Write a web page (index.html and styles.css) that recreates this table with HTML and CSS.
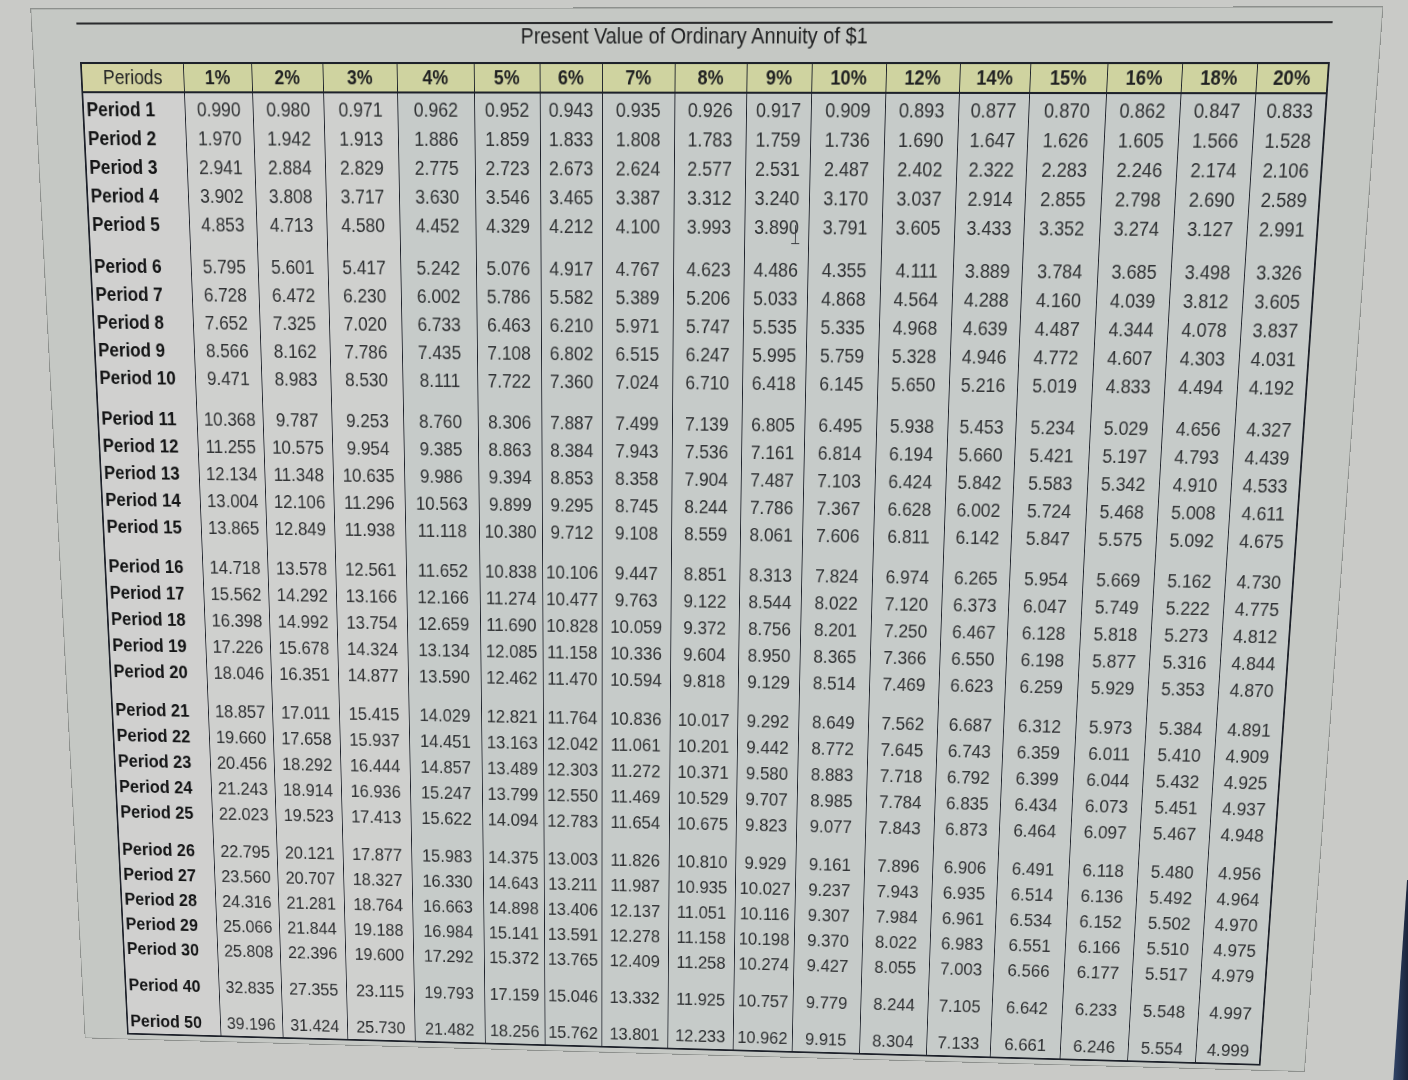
FILE: index.html
```
<!DOCTYPE html>
<html>
<head>
<meta charset="utf-8">
<title>Present Value of Ordinary Annuity of $1</title>
<link rel="stylesheet" href="styles.css">
</head>
<body>
<div class="stage">
  <div class="panel">
    <div class="rule"></div>
    <h1 class="title">Present Value of Ordinary Annuity of $1</h1>
    <table class="pv">
      <colgroup>
        <col class="c0"><col class="c1"><col class="c2"><col class="c3"><col class="c4"><col class="c5"><col class="c6"><col class="c7"><col class="c8"><col class="c9"><col class="c10"><col class="c12"><col class="c14"><col class="c15"><col class="c16"><col class="c18"><col class="c20">
      </colgroup>
      <thead>
        <tr><th class="lbl">Periods</th><th>1%</th><th>2%</th><th>3%</th><th>4%</th><th>5%</th><th>6%</th><th>7%</th><th>8%</th><th>9%</th><th>10%</th><th>12%</th><th>14%</th><th>15%</th><th>16%</th><th>18%</th><th>20%</th></tr>
      </thead>
      <tbody>
        <tr class="first"><td class="lbl">Period 1</td><td>0.990</td><td>0.980</td><td>0.971</td><td class="t">0.962</td><td class="t">0.952</td><td class="t">0.943</td><td class="t">0.935</td><td class="t">0.926</td><td class="t">0.917</td><td class="t">0.909</td><td class="t">0.893</td><td class="t">0.877</td><td class="t">0.870</td><td class="t">0.862</td><td class="t">0.847</td><td class="t">0.833</td></tr>
        <tr><td class="lbl">Period 2</td><td>1.970</td><td>1.942</td><td>1.913</td><td class="t">1.886</td><td class="t">1.859</td><td class="t">1.833</td><td class="t">1.808</td><td class="t">1.783</td><td class="t">1.759</td><td class="t">1.736</td><td class="t">1.690</td><td class="t">1.647</td><td class="t">1.626</td><td class="t">1.605</td><td class="t">1.566</td><td class="t">1.528</td></tr>
        <tr><td class="lbl">Period 3</td><td>2.941</td><td>2.884</td><td>2.829</td><td class="t">2.775</td><td class="t">2.723</td><td class="t">2.673</td><td class="t">2.624</td><td class="t">2.577</td><td class="t">2.531</td><td class="t">2.487</td><td class="t">2.402</td><td class="t">2.322</td><td class="t">2.283</td><td class="t">2.246</td><td class="t">2.174</td><td class="t">2.106</td></tr>
        <tr><td class="lbl">Period 4</td><td>3.902</td><td>3.808</td><td>3.717</td><td class="t">3.630</td><td class="t">3.546</td><td class="t">3.465</td><td class="t">3.387</td><td class="t">3.312</td><td class="t">3.240</td><td class="t">3.170</td><td class="t">3.037</td><td class="t">2.914</td><td class="t">2.855</td><td class="t">2.798</td><td class="t">2.690</td><td class="t">2.589</td></tr>
        <tr class="last"><td class="lbl">Period 5</td><td>4.853</td><td>4.713</td><td>4.580</td><td class="t">4.452</td><td class="t">4.329</td><td class="t">4.212</td><td class="t">4.100</td><td class="t">3.993</td><td class="t cur">3.890<span class="ibeam"></span></td><td class="t">3.791</td><td class="t">3.605</td><td class="t">3.433</td><td class="t">3.352</td><td class="t">3.274</td><td class="t">3.127</td><td class="t">2.991</td></tr>
        <tr class="first"><td class="lbl">Period 6</td><td>5.795</td><td>5.601</td><td>5.417</td><td class="t">5.242</td><td class="t">5.076</td><td class="t">4.917</td><td class="t">4.767</td><td class="t">4.623</td><td class="t">4.486</td><td class="t">4.355</td><td class="t">4.111</td><td class="t">3.889</td><td class="t">3.784</td><td class="t">3.685</td><td class="t">3.498</td><td class="t">3.326</td></tr>
        <tr><td class="lbl">Period 7</td><td>6.728</td><td>6.472</td><td>6.230</td><td class="t">6.002</td><td class="t">5.786</td><td class="t">5.582</td><td class="t">5.389</td><td class="t">5.206</td><td class="t">5.033</td><td class="t">4.868</td><td class="t">4.564</td><td class="t">4.288</td><td class="t">4.160</td><td class="t">4.039</td><td class="t">3.812</td><td class="t">3.605</td></tr>
        <tr><td class="lbl">Period 8</td><td>7.652</td><td>7.325</td><td>7.020</td><td class="t">6.733</td><td class="t">6.463</td><td class="t">6.210</td><td class="t">5.971</td><td class="t">5.747</td><td class="t">5.535</td><td class="t">5.335</td><td class="t">4.968</td><td class="t">4.639</td><td class="t">4.487</td><td class="t">4.344</td><td class="t">4.078</td><td class="t">3.837</td></tr>
        <tr><td class="lbl">Period 9</td><td>8.566</td><td>8.162</td><td>7.786</td><td class="t">7.435</td><td class="t">7.108</td><td class="t">6.802</td><td class="t">6.515</td><td class="t">6.247</td><td class="t">5.995</td><td class="t">5.759</td><td class="t">5.328</td><td class="t">4.946</td><td class="t">4.772</td><td class="t">4.607</td><td class="t">4.303</td><td class="t">4.031</td></tr>
        <tr class="last"><td class="lbl">Period 10</td><td>9.471</td><td>8.983</td><td>8.530</td><td class="t">8.111</td><td class="t">7.722</td><td class="t">7.360</td><td class="t">7.024</td><td class="t">6.710</td><td class="t">6.418</td><td class="t">6.145</td><td class="t">5.650</td><td class="t">5.216</td><td class="t">5.019</td><td class="t">4.833</td><td class="t">4.494</td><td class="t">4.192</td></tr>
        <tr class="first"><td class="lbl">Period 11</td><td>10.368</td><td>9.787</td><td>9.253</td><td class="t">8.760</td><td class="t">8.306</td><td class="t">7.887</td><td class="t">7.499</td><td class="t">7.139</td><td class="t">6.805</td><td class="t">6.495</td><td class="t">5.938</td><td class="t">5.453</td><td class="t">5.234</td><td class="t">5.029</td><td class="t">4.656</td><td class="t">4.327</td></tr>
        <tr><td class="lbl">Period 12</td><td>11.255</td><td>10.575</td><td>9.954</td><td class="t">9.385</td><td class="t">8.863</td><td class="t">8.384</td><td class="t">7.943</td><td class="t">7.536</td><td class="t">7.161</td><td class="t">6.814</td><td class="t">6.194</td><td class="t">5.660</td><td class="t">5.421</td><td class="t">5.197</td><td class="t">4.793</td><td class="t">4.439</td></tr>
        <tr><td class="lbl">Period 13</td><td>12.134</td><td>11.348</td><td>10.635</td><td class="t">9.986</td><td class="t">9.394</td><td class="t">8.853</td><td class="t">8.358</td><td class="t">7.904</td><td class="t">7.487</td><td class="t">7.103</td><td class="t">6.424</td><td class="t">5.842</td><td class="t">5.583</td><td class="t">5.342</td><td class="t">4.910</td><td class="t">4.533</td></tr>
        <tr><td class="lbl">Period 14</td><td>13.004</td><td>12.106</td><td>11.296</td><td class="t">10.563</td><td class="t">9.899</td><td class="t">9.295</td><td class="t">8.745</td><td class="t">8.244</td><td class="t">7.786</td><td class="t">7.367</td><td class="t">6.628</td><td class="t">6.002</td><td class="t">5.724</td><td class="t">5.468</td><td class="t">5.008</td><td class="t">4.611</td></tr>
        <tr class="last"><td class="lbl">Period 15</td><td>13.865</td><td>12.849</td><td>11.938</td><td class="t">11.118</td><td class="t">10.380</td><td class="t">9.712</td><td class="t">9.108</td><td class="t">8.559</td><td class="t">8.061</td><td class="t">7.606</td><td class="t">6.811</td><td class="t">6.142</td><td class="t">5.847</td><td class="t">5.575</td><td class="t">5.092</td><td class="t">4.675</td></tr>
        <tr class="first"><td class="lbl">Period 16</td><td>14.718</td><td>13.578</td><td>12.561</td><td class="t">11.652</td><td class="t">10.838</td><td class="t">10.106</td><td class="t">9.447</td><td class="t">8.851</td><td class="t">8.313</td><td class="t">7.824</td><td class="t">6.974</td><td class="t">6.265</td><td class="t">5.954</td><td class="t">5.669</td><td class="t">5.162</td><td class="t">4.730</td></tr>
        <tr><td class="lbl">Period 17</td><td>15.562</td><td>14.292</td><td>13.166</td><td class="t">12.166</td><td class="t">11.274</td><td class="t">10.477</td><td class="t">9.763</td><td class="t">9.122</td><td class="t">8.544</td><td class="t">8.022</td><td class="t">7.120</td><td class="t">6.373</td><td class="t">6.047</td><td class="t">5.749</td><td class="t">5.222</td><td class="t">4.775</td></tr>
        <tr><td class="lbl">Period 18</td><td>16.398</td><td>14.992</td><td>13.754</td><td class="t">12.659</td><td class="t">11.690</td><td class="t">10.828</td><td class="t">10.059</td><td class="t">9.372</td><td class="t">8.756</td><td class="t">8.201</td><td class="t">7.250</td><td class="t">6.467</td><td class="t">6.128</td><td class="t">5.818</td><td class="t">5.273</td><td class="t">4.812</td></tr>
        <tr><td class="lbl">Period 19</td><td>17.226</td><td>15.678</td><td>14.324</td><td class="t">13.134</td><td class="t">12.085</td><td class="t">11.158</td><td class="t">10.336</td><td class="t">9.604</td><td class="t">8.950</td><td class="t">8.365</td><td class="t">7.366</td><td class="t">6.550</td><td class="t">6.198</td><td class="t">5.877</td><td class="t">5.316</td><td class="t">4.844</td></tr>
        <tr class="last"><td class="lbl">Period 20</td><td>18.046</td><td>16.351</td><td>14.877</td><td class="t">13.590</td><td class="t">12.462</td><td class="t">11.470</td><td class="t">10.594</td><td class="t">9.818</td><td class="t">9.129</td><td class="t">8.514</td><td class="t">7.469</td><td class="t">6.623</td><td class="t">6.259</td><td class="t">5.929</td><td class="t">5.353</td><td class="t">4.870</td></tr>
        <tr class="first"><td class="lbl">Period 21</td><td>18.857</td><td>17.011</td><td>15.415</td><td class="t">14.029</td><td class="t">12.821</td><td class="t">11.764</td><td class="t">10.836</td><td class="t">10.017</td><td class="t">9.292</td><td class="t">8.649</td><td class="t">7.562</td><td class="t">6.687</td><td class="t">6.312</td><td class="t">5.973</td><td class="t">5.384</td><td class="t">4.891</td></tr>
        <tr><td class="lbl">Period 22</td><td>19.660</td><td>17.658</td><td>15.937</td><td class="t">14.451</td><td class="t">13.163</td><td class="t">12.042</td><td class="t">11.061</td><td class="t">10.201</td><td class="t">9.442</td><td class="t">8.772</td><td class="t">7.645</td><td class="t">6.743</td><td class="t">6.359</td><td class="t">6.011</td><td class="t">5.410</td><td class="t">4.909</td></tr>
        <tr><td class="lbl">Period 23</td><td>20.456</td><td>18.292</td><td>16.444</td><td class="t">14.857</td><td class="t">13.489</td><td class="t">12.303</td><td class="t">11.272</td><td class="t">10.371</td><td class="t">9.580</td><td class="t">8.883</td><td class="t">7.718</td><td class="t">6.792</td><td class="t">6.399</td><td class="t">6.044</td><td class="t">5.432</td><td class="t">4.925</td></tr>
        <tr><td class="lbl">Period 24</td><td>21.243</td><td>18.914</td><td>16.936</td><td class="t">15.247</td><td class="t">13.799</td><td class="t">12.550</td><td class="t">11.469</td><td class="t">10.529</td><td class="t">9.707</td><td class="t">8.985</td><td class="t">7.784</td><td class="t">6.835</td><td class="t">6.434</td><td class="t">6.073</td><td class="t">5.451</td><td class="t">4.937</td></tr>
        <tr class="last"><td class="lbl">Period 25</td><td>22.023</td><td>19.523</td><td>17.413</td><td class="t">15.622</td><td class="t">14.094</td><td class="t">12.783</td><td class="t">11.654</td><td class="t">10.675</td><td class="t">9.823</td><td class="t">9.077</td><td class="t">7.843</td><td class="t">6.873</td><td class="t">6.464</td><td class="t">6.097</td><td class="t">5.467</td><td class="t">4.948</td></tr>
        <tr class="first"><td class="lbl">Period 26</td><td>22.795</td><td>20.121</td><td>17.877</td><td class="t">15.983</td><td class="t">14.375</td><td class="t">13.003</td><td class="t">11.826</td><td class="t">10.810</td><td class="t">9.929</td><td class="t">9.161</td><td class="t">7.896</td><td class="t">6.906</td><td class="t">6.491</td><td class="t">6.118</td><td class="t">5.480</td><td class="t">4.956</td></tr>
        <tr><td class="lbl">Period 27</td><td>23.560</td><td>20.707</td><td>18.327</td><td class="t">16.330</td><td class="t">14.643</td><td class="t">13.211</td><td class="t">11.987</td><td class="t">10.935</td><td class="t">10.027</td><td class="t">9.237</td><td class="t">7.943</td><td class="t">6.935</td><td class="t">6.514</td><td class="t">6.136</td><td class="t">5.492</td><td class="t">4.964</td></tr>
        <tr><td class="lbl">Period 28</td><td>24.316</td><td>21.281</td><td>18.764</td><td class="t">16.663</td><td class="t">14.898</td><td class="t">13.406</td><td class="t">12.137</td><td class="t">11.051</td><td class="t">10.116</td><td class="t">9.307</td><td class="t">7.984</td><td class="t">6.961</td><td class="t">6.534</td><td class="t">6.152</td><td class="t">5.502</td><td class="t">4.970</td></tr>
        <tr><td class="lbl">Period 29</td><td>25.066</td><td>21.844</td><td>19.188</td><td class="t">16.984</td><td class="t">15.141</td><td class="t">13.591</td><td class="t">12.278</td><td class="t">11.158</td><td class="t">10.198</td><td class="t">9.370</td><td class="t">8.022</td><td class="t">6.983</td><td class="t">6.551</td><td class="t">6.166</td><td class="t">5.510</td><td class="t">4.975</td></tr>
        <tr class="last"><td class="lbl">Period 30</td><td>25.808</td><td>22.396</td><td>19.600</td><td class="t">17.292</td><td class="t">15.372</td><td class="t">13.765</td><td class="t">12.409</td><td class="t">11.258</td><td class="t">10.274</td><td class="t">9.427</td><td class="t">8.055</td><td class="t">7.003</td><td class="t">6.566</td><td class="t">6.177</td><td class="t">5.517</td><td class="t">4.979</td></tr>
        <tr class="first last"><td class="lbl">Period 40</td><td>32.835</td><td>27.355</td><td>23.115</td><td class="t">19.793</td><td class="t">17.159</td><td class="t">15.046</td><td class="t">13.332</td><td class="t">11.925</td><td class="t">10.757</td><td class="t">9.779</td><td class="t">8.244</td><td class="t">7.105</td><td class="t">6.642</td><td class="t">6.233</td><td class="t">5.548</td><td class="t">4.997</td></tr>
        <tr class="first"><td class="lbl">Period 50</td><td>39.196</td><td>31.424</td><td>25.730</td><td class="t">21.482</td><td class="t">18.256</td><td class="t">15.762</td><td class="t">13.801</td><td class="t">12.233</td><td class="t">10.962</td><td class="t">9.915</td><td class="t">8.304</td><td class="t">7.133</td><td class="t">6.661</td><td class="t">6.246</td><td class="t">5.554</td><td class="t">4.999</td></tr>
      </tbody>
    </table>
  </div>
</div>
<div class="bezel"></div>
</body>
</html>
```

FILE: styles.css
```
html, body {
  margin: 0;
  height: 100%;
  overflow: hidden;
}

body {
  position: relative;
  background: #c9cac7;
  font-family: "Liberation Sans", Arial, sans-serif;
}

.stage {
  padding: 9px 0 0 26px;
}

/* The sheet is laid out flat, then tilted like the photographed monitor. */
.panel {
  box-sizing: border-box;
  width: 1496px;
  height: 1120px;
  padding: 13px 0 0 53px;
  border: 1px solid #8d908d;
  background: #c5c8c4;
  transform-origin: 54px 53px;
  transform: matrix3d(0.869120, 0, 0, -0.0000245696,
                      0.048884, 1.008866, 0, 0.0000948913,
                      0, 0, 1, 0,
                      0, 0, 0, 1);
}

.rule {
  width: 1391px;
  height: 2px;
  margin-left: -2px;
  background: #2b2c2e;
}

.title {
  width: 1387px;
  margin: 0 0 13px;
  font-size: 22px;
  font-weight: normal;
  line-height: 24px;
  text-align: center;
  color: #1f2021;
}

.pv {
  width: 1387px;
  table-layout: fixed;
  border-collapse: collapse;
  border: 2px solid #1d212a;
  font-size: 20px;
  color: #303234;
}

.c0 { width: 117px; }
.c1 { width: 78px; }
.c2 { width: 81px; }
.c3 { width: 84px; }
.c4 { width: 87px; }
.c5 { width: 74px; }
.c6 { width: 70px; }
.c7 { width: 81px; }
.c8 { width: 80px; }
.c9 { width: 72px; }
.c10 { width: 82px; }
.c12 { width: 81px; }
.c14 { width: 77px; }
.c15 { width: 84px; }
.c16 { width: 81px; }
.c18 { width: 81px; }
.c20 { width: 77px; }

.pv th {
  padding: 0;
  height: 27px;
  line-height: 27px;
  background: #cfd3a0;
  border: 1px solid #1d212a;
  border-bottom: 2px solid #1d212a;
  font-weight: bold;
  color: #202122;
  text-align: center;
}

.pv th.lbl {
  font-weight: normal;
  background: #d3d3a2;
}

.pv td {
  padding: 0;
  line-height: 29px;
  text-align: center;
  white-space: nowrap;
  border-left: 1px solid #1d212a;
  background: #cfd0ce;
}

.pv td.t {
  background: #c6cbc9;
}

.pv td.lbl {
  padding-left: 3px;
  text-align: left;
  font-weight: bold;
  color: #141516;
  background: #d0d0cf;
}

.pv tr.first td {
  padding-top: 2px;
}

.pv tr.last td {
  padding-bottom: 12px;
}

/* mouse text cursor resting on the 9% column */
.pv td.cur {
  position: relative;
}

.ibeam {
  position: absolute;
  left: 56px;
  top: 12px;
  width: 1px;
  height: 19px;
  background: #3a3c40;
}

.ibeam::after {
  content: "";
  position: absolute;
  left: -4px;
  bottom: 0;
  width: 9px;
  height: 1px;
  background: #3a3c40;
}

/* edge of the monitor bezel in the lower right corner */
.bezel {
  position: absolute;
  right: 0;
  bottom: 0;
  width: 16px;
  height: 200px;
  background: linear-gradient(90deg, #33476b, #1a243b);
  clip-path: polygon(100% 0, 100% 100%, 8% 100%, 94% 0);
}
```
